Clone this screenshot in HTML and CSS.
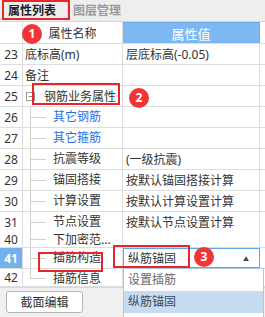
FILE: index.html
```html
<!DOCTYPE html>
<html lang="zh-CN">
<head>
  <meta charset="UTF-8" />
  <meta name="viewport" content="width=device-width, initial-scale=1.0" />
  <title>属性列表</title>
  <link rel="stylesheet" href="styles.css">
</head>
<body>
  <!-- Tab bar -->
  <div class="tabs">
    <div class="tab active">属性列表</div>
    <div class="tab">图层管理</div>
  </div>

  <!-- Header -->
  <div class="row head">
    <div class="num"></div>
    <div class="hname">属性名称</div>
    <div class="hval">属性值</div>
  </div>

  <!-- Property rows -->
  <div class="row"><div class="num">23</div><div class="name">底标高(m)</div><div class="val">层底标高(-0.05)</div></div>
  <div class="row"><div class="num">24</div><div class="name">备注</div><div class="val"></div></div>
  <div class="row"><div class="num">25</div><div class="name"><span class="toggle">−</span><span class="grp">钢筋业务属性</span></div><div class="val"></div></div>
  <div class="row"><div class="num">26</div><div class="name tree"><span class="twig"></span><span class="link">其它钢筋</span></div><div class="val"></div></div>
  <div class="row"><div class="num">27</div><div class="name tree"><span class="twig"></span><span class="link">其它箍筋</span></div><div class="val"></div></div>
  <div class="row"><div class="num">28</div><div class="name tree"><span class="twig"></span>抗震等级</div><div class="val">(一级抗震)</div></div>
  <div class="row"><div class="num">29</div><div class="name tree"><span class="twig"></span>锚固搭接</div><div class="val">按默认锚固搭接计算</div></div>
  <div class="row"><div class="num">30</div><div class="name tree"><span class="twig"></span>计算设置</div><div class="val">按默认计算设置计算</div></div>
  <div class="row squeeze"><div class="num">31</div><div class="name tree"><span class="twig"></span>节点设置</div><div class="val">按默认节点设置计算</div></div>
  <div class="row short"><div class="num">40</div><div class="name tree"><span class="twig"></span>下加密范...</div><div class="val"></div></div>
  <div class="row"><div class="num selected">41</div><div class="name tree"><span class="twig"></span>插筋构造</div>
    <div class="val edit">
      <div class="combo">
        <span>纵筋锚固</span><span class="arrow">▲</span>
        <div class="menu">
          <div class="item">设置插筋</div>
          <div class="item picked">纵筋锚固</div>
        </div>
      </div>
    </div>
  </div>
  <div class="row last"><div class="num">42</div><div class="name tree"><span class="twig end"></span>插筋信息</div><div class="val"></div></div>

  <!-- Bottom panel -->
  <div class="footer">
    <button class="btn">截面编辑</button>
  </div>

  <!-- Annotations -->
  <div class="mark m1"></div>
  <div class="mark m2"></div>
  <div class="mark m3"></div>
  <div class="mark m4"></div>
  <div class="badge b1">1</div>
  <div class="badge b2">2</div>
  <div class="badge b3">3</div>
</body>
</html>
```

FILE: styles.css
```css
* {
  box-sizing: border-box;
}

body {
  margin: 0;
  width: 265px;
  height: 317px;
  overflow: hidden;
  position: relative;
  font-family: "Noto Sans", "Noto Sans CJK SC", sans-serif;
  font-size: 12px;
  color: #333;
  background: #fff;
}

/* tabs */
.tabs {
  display: flex;
  height: 22px;
  background: #eeeeee;
  border-bottom: 1px solid #d6d6d6;
}
.tab {
  width: 68px;
  padding-left: 8px;
  line-height: 21px;
  font-weight: bold;
  color: #9a9a9a;
}
.tab.active {
  color: #222;
  border-right: 1px solid #d6d6d6;
}
.tab + .tab {
  padding-left: 5px;
}

/* grid rows */
.row {
  display: grid;
  grid-template-columns: 23px 100px 137px;
  height: 21px;
  border-bottom: 1px solid #dedede;
}
.row > div {
  display: flex;
  align-items: center;
  white-space: nowrap;
  overflow: hidden;
  border-right: 1px solid #dedede;
}
.num {
  justify-content: center;
  color: #333;
}
.name {
  padding-left: 2px;
}
.val {
  padding-left: 3px;
}

.head {
  height: 22px;
}
.hname {
  justify-content: center;
}
.row > .hval {
  justify-content: center;
  background: #7eb8f2;
  color: #fff;
  font-size: 13px;
  border-top: 1px solid #6caaea;
  border-right: 1px solid #6caaea;
}

.squeeze {
  height: 20px;
  border-bottom: none;
}
.short {
  height: 16px;
}
.last {
  height: 18px;
}

.row > .selected {
  background: #72b0ee;
  color: #fff;
  font-weight: bold;
}

/* tree */
.toggle {
  width: 9px;
  height: 9px;
  border: 1px solid #9a9a9a;
  font-size: 9px;
  line-height: 7px;
  text-align: center;
  color: #555;
  margin-left: 1px;
}
.grp {
  margin-left: 9px;
}
.row > .tree {
  padding-left: 0;
  align-items: stretch;
}
.tree {
  line-height: 20px;
}
.twig {
  width: 16px;
  margin-left: 7px;
  margin-right: 7px;
  border-left: 1px solid #d0d0d0;
  display: flex;
  align-items: center;
}
.twig::after {
  content: "";
  flex: 1;
  border-top: 1px solid #d0d0d0;
}
.twig.end {
  height: 10px;
  align-items: flex-end;
}
.short .tree {
  line-height: 16px;
}
.last .tree {
  line-height: 20px;
}
.link {
  color: #2b6fe0;
}

/* editor */
.row > .edit {
  overflow: visible;
  padding-left: 0;
  border-right: none;
}
.combo {
  position: relative;
  z-index: 2;
  width: 141px;
  height: 20px;
  border: 1px solid #5fa5ea;
  background: #fff;
  display: flex;
  align-items: center;
  justify-content: space-between;
  padding: 0 10px 0 4px;
}
.arrow {
  font-size: 6px;
  color: #444;
}
.menu {
  position: absolute;
  top: 19px;
  left: -1px;
  width: 141px;
  height: 60px;
  border: 1px solid #a9c9ea;
  background: #fff;
}
.item {
  height: 22px;
  line-height: 22px;
  padding-left: 4px;
  color: #666;
}
.item.picked {
  background: #c6dcf1;
  color: #3a4a5a;
}

/* bottom */
.footer {
  height: 30px;
  background: #f0f0f0;
  border-top: 1px solid #d8d8d8;
  padding: 3px 6px;
}
.btn {
  width: 77px;
  height: 22px;
  background: #fff;
  border: 1px solid #b4b4b4;
  border-radius: 3px;
  font-family: inherit;
  font-size: 12px;
  color: #333;
  padding: 0;
}

/* annotations */
.mark {
  position: absolute;
  z-index: 5;
  border: 2px solid #e8262a;
}
.m1 { left: 2px; top: 0; width: 68px; height: 20px; }
.m2 { left: 32px; top: 83px; width: 88px; height: 22px; }
.m3 { left: 38px; top: 252px; width: 65px; height: 20px; }
.m4 { left: 113px; top: 245px; width: 77px; height: 23px; }

.badge {
  position: absolute;
  z-index: 6;
  width: 20px;
  height: 20px;
  border-radius: 50%;
  background: #ee3636;
  color: #fff;
  font-size: 12px;
  font-weight: bold;
  text-align: center;
  line-height: 20px;
}
.b1 { left: 22px; top: 24px; }
.b2 { left: 129px; top: 88px; }
.b3 { left: 194px; top: 247px; }
```
